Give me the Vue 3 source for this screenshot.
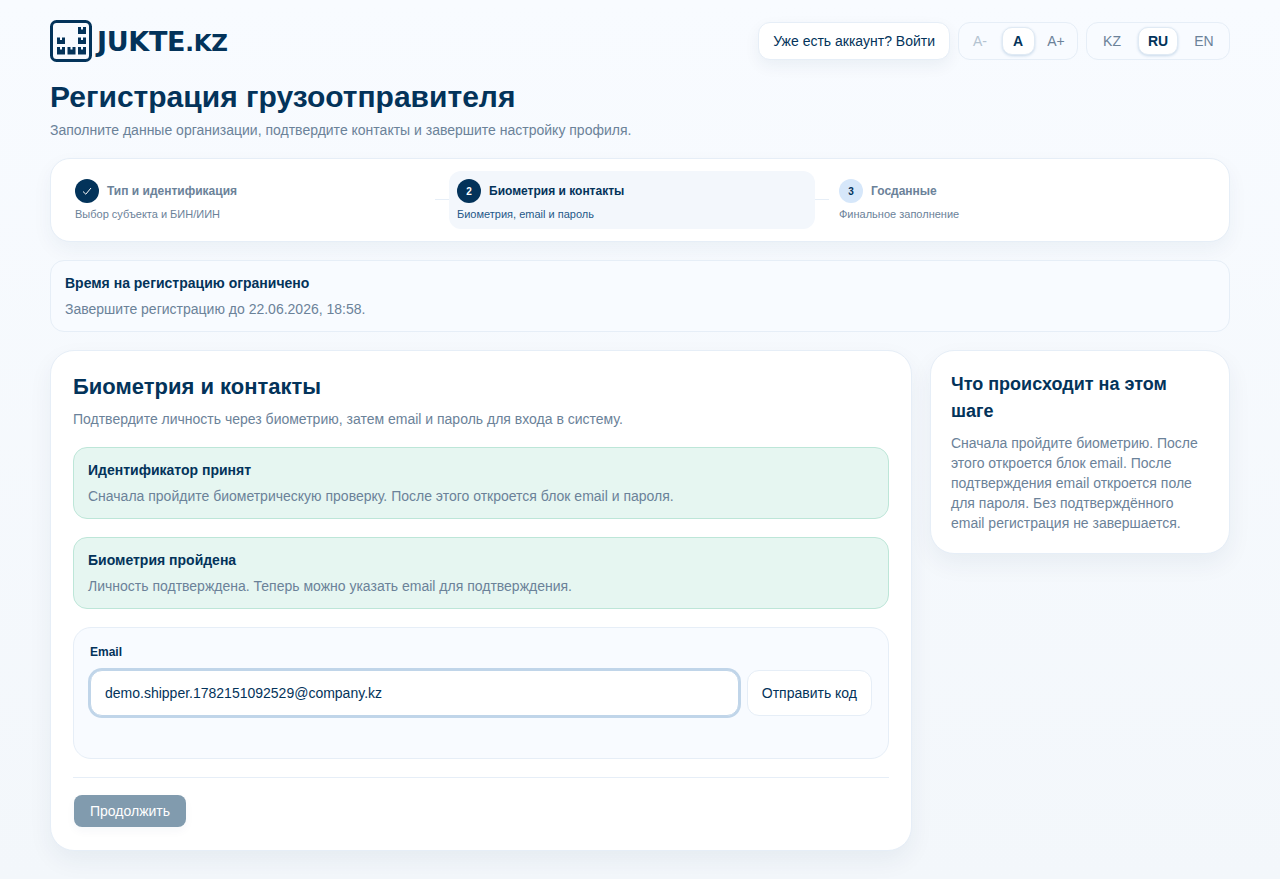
<template>
  <div class="page">
    <header class="topbar">
      <div class="logo">
        <svg class="logo-mark" width="42" height="42" viewBox="0 0 42 42" fill="none" xmlns="http://www.w3.org/2000/svg">
          <rect x="1.5" y="1.500" width="39" height="39" rx="5" stroke="#03335a" stroke-width="3" />
          <g fill="#03335a">
            <path d="M7 17.500h3v2.500h2v-2.500h3V24H7z" />
            <path d="M7 27h3v2.500h2V27h3v7.500H7z" />
            <path d="M17.500 27h3v2.500h2V27h3v7.500h-8z" />
            <path d="M28 7h3v2.500h2V7h3v7h-8z" />
            <path d="M28 17.500h3v2.500h2v-2.500h3V24h-8z" />
            <path d="M28 27h3v2.500h2V27h3v7.500h-8z" />
          </g>
        </svg>
        <span class="logo-text">JUKTE<span class="logo-dot">.KZ</span></span>
      </div>
      <div class="top-actions">
        <button class="login-btn">Уже есть аккаунт? Войти</button>
        <div class="switch font-switch">
          <button class="switch-item faded">A-</button>
          <button class="switch-item active">A</button>
          <button class="switch-item">A+</button>
        </div>
        <div class="switch lang-switch">
          <button v-for="lang in langs" :key="lang" class="switch-item" :class="{ active: lang === 'RU' }">{{ lang }}</button>
        </div>
      </div>
    </header>

    <h1 class="page-title">Регистрация грузоотправителя</h1>
    <p class="page-sub">Заполните данные организации, подтвердите контакты и завершите настройку профиля.</p>

    <section class="stepper">
      <template v-for="(step, i) in steps" :key="step.title">
        <div class="step" :class="step.state">
          <div class="step-head">
            <span class="step-num">
              <svg v-if="step.state === 'done'" width="10" height="10" viewBox="0 0 10 10" fill="none" xmlns="http://www.w3.org/2000/svg">
                <path d="M1 5.500L3.800 8.200L9 2" stroke="#ffffff" stroke-width="1" />
              </svg>
              <template v-else>{{ i + 1 }}</template>
            </span>
            <span class="step-title">{{ step.title }}</span>
          </div>
          <div class="step-desc">{{ step.desc }}</div>
        </div>
        <div v-if="i < steps.length - 1" class="step-line"></div>
      </template>
    </section>

    <section class="notice">
      <div class="notice-title">Время на регистрацию ограничено</div>
      <div class="notice-text">Завершите регистрацию до 22.06.2026, 18:58.</div>
    </section>

    <div class="columns">
      <main class="card main-card">
        <h2 class="card-title">Биометрия и контакты</h2>
        <p class="card-sub">Подтвердите личность через биометрию, затем email и пароль для входа в систему.</p>

        <div class="success-box">
          <div class="notice-title">Идентификатор принят</div>
          <div class="notice-text">Сначала пройдите биометрическую проверку. После этого откроется блок email и пароля.</div>
        </div>
        <div class="success-box">
          <div class="notice-title">Биометрия пройдена</div>
          <div class="notice-text">Личность подтверждена. Теперь можно указать email для подтверждения.</div>
        </div>

        <div class="email-box">
          <label class="field-label">Email</label>
          <div class="email-row">
            <input v-model="email" class="email-input" type="text" />
            <button class="send-btn">Отправить код</button>
          </div>
        </div>

        <div class="card-footer">
          <button class="next-btn">Продолжить</button>
        </div>
      </main>

      <aside class="card side-card">
        <h3 class="side-title">Что происходит на этом шаге</h3>
        <p class="side-text">Сначала пройдите биометрию. После этого откроется блок email. После подтверждения email откроется поле для пароля. Без подтверждённого email регистрация не завершается.</p>
      </aside>
    </div>
  </div>
</template>

<script setup>
import { ref } from "vue";

const langs = ["KZ", "RU", "EN"];
const email = ref("demo.shipper.1782151092529@company.kz");

const steps = [
  { title: "Тип и идентификация", desc: "Выбор субъекта и БИН/ИИН", state: "done" },
  { title: "Биометрия и контакты", desc: "Биометрия, email и пароль", state: "current" },
  { title: "Госданные", desc: "Финальное заполнение", state: "next" },
];
</script>

<style>
html,
body {
  margin: 0;
  background: #f3f7fb;
  min-height: 100%;
}
</style>

<style scoped>
.page {
  box-sizing: border-box;
  width: 1280px;
  min-height: 879px;
  padding: 20px 50px 28px;
  font-family: "Liberation Sans", Arial, sans-serif;
  color: #03335a;
  background: linear-gradient(180deg, #f8fbff 0%, #f3f7fb 100%);
}

button {
  font-family: inherit;
  cursor: pointer;
}

.topbar {
  display: flex;
  justify-content: space-between;
  align-items: center;
  height: 42px;
}

.logo {
  display: flex;
  align-items: center;
  gap: 5px;
}

.logo-text {
  font-family: "DejaVu Sans", sans-serif;
  font-size: 27px;
  font-weight: 700;
  letter-spacing: -0.3px;
  color: #03335a;
}

.logo-dot {
  font-size: 23px;
}

.top-actions {
  display: flex;
  align-items: center;
  gap: 8px;
}

.login-btn {
  height: 38px;
  padding: 0 14px;
  background: #ffffff;
  border: 1px solid #e6eef7;
  border-radius: 12px;
  color: #03335a;
  font-size: 14px;
  box-shadow: 0 6px 16px rgba(3, 51, 90, 0.06);
}

.switch {
  display: flex;
  align-items: center;
  box-sizing: border-box;
  height: 38px;
  background: #f8fbff;
  border: 1px solid #e6eef7;
  border-radius: 12px;
}

.switch-item {
  height: 28px;
  padding: 0;
  background: none;
  border: 1px solid transparent;
  border-radius: 10px;
  color: #6b8299;
  font-size: 14px;
}

.switch-item.faded {
  color: #b4c3d1;
}

.switch-item.active {
  background: #ffffff;
  border-color: #e0eaf4;
  color: #03335a;
  font-weight: 700;
  box-shadow: 0 1px 3px rgba(3, 80, 150, 0.2);
}

.font-switch {
  width: 120px;
  justify-content: center;
  gap: 5px;
}

.font-switch .switch-item {
  width: 33px;
}

.lang-switch {
  width: 144px;
  justify-content: center;
  gap: 6px;
}

.lang-switch .switch-item {
  width: 40px;
}

.page-title {
  margin: 16px 0 0;
  font-size: 30px;
  line-height: 38px;
  font-weight: 700;
  color: #03335a;
}

.page-sub {
  margin: 4px 0 0;
  font-size: 14px;
  line-height: 20px;
  color: #6b8299;
}

.stepper {
  display: grid;
  grid-template-columns: 370px 14px 366px 14px 1fr;
  align-items: center;
  box-sizing: border-box;
  height: 84px;
  margin-top: 18px;
  padding: 12px 14px;
  background: #ffffff;
  border: 1px solid #e6eef7;
  border-radius: 20px;
  box-shadow: 0 8px 20px rgba(3, 51, 90, 0.05);
}

.step {
  box-sizing: border-box;
  height: 58px;
  padding: 8px 10px;
  border-radius: 12px;
}

.step.current {
  background: #f3f7fc;
  padding-left: 8px;
}

.step-head {
  display: flex;
  align-items: center;
  gap: 8px;
}

.step-num {
  display: flex;
  align-items: center;
  justify-content: center;
  width: 24px;
  height: 24px;
  border-radius: 50%;
  background: #03335a;
  color: #ffffff;
  font-size: 10px;
  font-weight: 700;
}

.step.next .step-num {
  background: #d6e7fa;
  color: #03335a;
}

.step-title {
  font-size: 12px;
  font-weight: 700;
  color: #6b8299;
}

.step.current .step-title {
  color: #03335a;
}

.step-desc {
  margin-top: 4px;
  font-size: 11px;
  line-height: 14px;
  color: #6b8299;
}

.step.current .step-desc {
  color: #1f5788;
}

.step-line {
  height: 1px;
  margin-bottom: 2px;
  background: #e6eef7;
}

.notice {
  box-sizing: border-box;
  height: 72px;
  margin-top: 18px;
  padding: 13px 14px;
  background: #f8fbff;
  border: 1px solid #e6eef7;
  border-radius: 14px;
}

.notice-title {
  font-size: 14px;
  line-height: 18px;
  font-weight: 700;
  color: #03335a;
}

.notice-text {
  margin-top: 8px;
  font-size: 14px;
  line-height: 18px;
  color: #6b8299;
}

.columns {
  display: grid;
  grid-template-columns: 862px 300px;
  gap: 18px;
  align-items: start;
  margin-top: 18px;
}

.card {
  box-sizing: border-box;
  background: #ffffff;
  border: 1px solid #e6eef7;
  border-radius: 24px;
  box-shadow: 0 10px 24px rgba(3, 51, 90, 0.06);
}

.main-card {
  height: 501px;
  padding: 22px;
}

.card-title {
  margin: 0;
  font-size: 22px;
  line-height: 28px;
  font-weight: 700;
  color: #03335a;
}

.card-sub {
  margin: 8px 0 0;
  font-size: 14px;
  line-height: 20px;
  color: #6b8299;
}

.success-box {
  box-sizing: border-box;
  height: 72px;
  margin-top: 18px;
  padding: 13px 14px;
  background: #e6f6f1;
  border: 1px solid #bde6d8;
  border-radius: 14px;
}

.email-box {
  box-sizing: border-box;
  height: 132px;
  margin-top: 18px;
  padding: 16px;
  background: #f8fbff;
  border: 1px solid #e6eef7;
  border-radius: 18px;
}

.field-label {
  display: block;
  font-size: 12px;
  line-height: 16px;
  font-weight: 700;
  color: #03335a;
}

.email-row {
  display: flex;
  align-items: center;
  gap: 8px;
  margin-top: 10px;
}

.email-input {
  flex: 1;
  min-width: 0;
  box-sizing: border-box;
  height: 46px;
  padding: 0 14px;
  background: #ffffff;
  border: 1px solid #c0d5e9;
  border-radius: 12px;
  outline: none;
  box-shadow: 0 0 0 2px #c0d5e9;
  font-family: inherit;
  font-size: 14px;
  color: #03335a;
}

.send-btn {
  height: 46px;
  padding: 0 14px;
  background: #ffffff;
  border: 1px solid #e6eef7;
  border-radius: 12px;
  color: #03335a;
  font-size: 14px;
}

.card-footer {
  margin-top: 18px;
  padding-top: 17px;
  border-top: 1px solid #e6eef7;
}

.next-btn {
  display: block;
  height: 32px;
  margin-left: 1px;
  padding: 0 16px;
  background: #819bae;
  border: none;
  border-radius: 8px;
  color: #ffffff;
  font-size: 14px;
  box-shadow: 0 4px 10px rgba(3, 51, 90, 0.04);
}

.side-card {
  height: 204px;
  padding: 20px;
}

.side-title {
  margin: 0;
  font-size: 18px;
  line-height: 27px;
  font-weight: 700;
  color: #03335a;
}

.side-text {
  margin: 8px 0 0;
  font-size: 14px;
  line-height: 20px;
  color: #6b8299;
}
</style>
